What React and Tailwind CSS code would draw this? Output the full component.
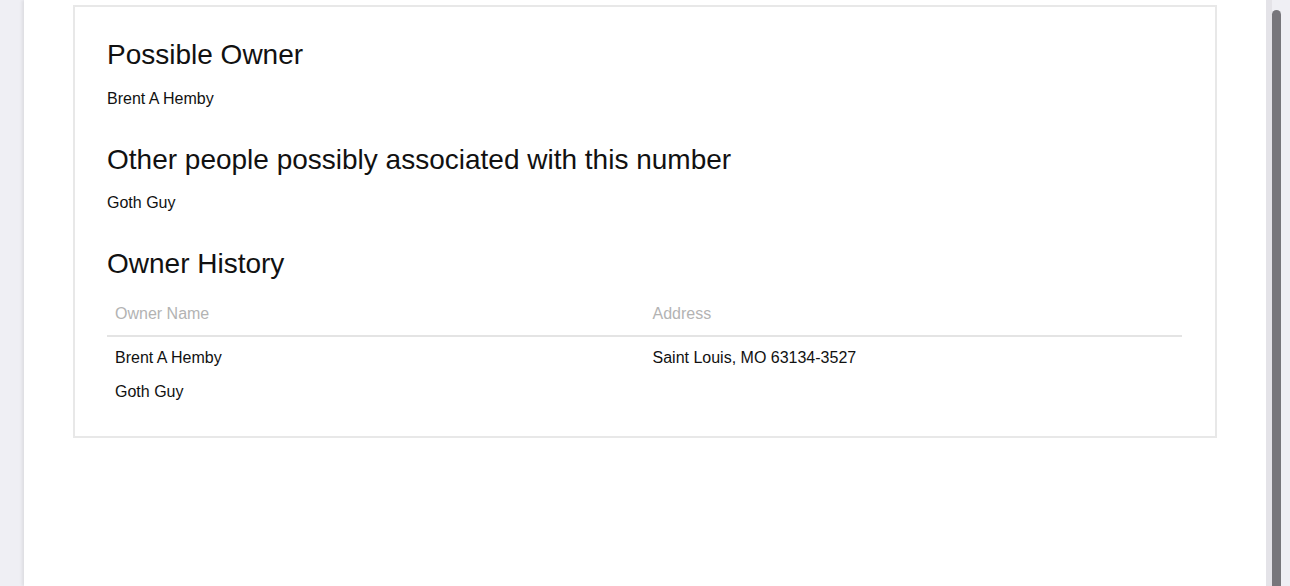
import React from 'react';

const owners = [
  { name: 'Brent A Hemby', address: 'Saint Louis, MO 63134-3527' },
  { name: 'Goth Guy', address: '' },
];

const App = () => {
  return (
    <div className="flex h-[586px] w-[1290px] overflow-hidden bg-[#efeff4] font-['Liberation_Sans',Arial,sans-serif] text-[#111]">
      <div className="w-[24px] shrink-0 bg-[#efeff4]" />
      <div className="flex-1 bg-white shadow-[-2px_0_3px_rgba(0,0,0,0.08)]">
        <div className="ml-[49px] mr-[49px] mt-[5px] border-2 border-[#e8e8e8] pl-[32px] pr-[33px] pt-[31px] pb-[27px]">
          <h2 className="text-[28px] leading-[34px]">Possible Owner</h2>
          <p className="mt-[17px] text-[16px] leading-[20px]">Brent A Hemby</p>

          <h2 className="mt-[34px] text-[28px] leading-[34px]">Other people possibly associated with this number</h2>
          <p className="mt-[16px] text-[16px] leading-[20px]">Goth Guy</p>

          <h2 className="mt-[34px] text-[28px] leading-[34px]">Owner History</h2>
          <table className="mt-[20px] w-full table-fixed text-left text-[16px]">
            <thead>
              <tr className="border-b-2 border-[#e4e4e4]">
                <th className="w-1/2 px-[8px] pb-[11px] pt-[3px] font-normal leading-[20px] text-[#b3b3b3]">Owner Name</th>
                <th className="w-1/2 px-[8px] pb-[11px] pt-[3px] font-normal leading-[20px] text-[#b3b3b3]">Address</th>
              </tr>
            </thead>
            <tbody>
              {owners.map((o, i) => (
                <tr key={i}>
                  <td className={`px-[8px] leading-[20px] ${i === 0 ? 'pt-[11px] pb-[7px]' : 'pt-[7px] pb-[7px]'}`}>{o.name}</td>
                  <td className={`px-[8px] leading-[20px] ${i === 0 ? 'pt-[11px] pb-[7px]' : 'pt-[7px] pb-[7px]'}`}>{o.address}</td>
                </tr>
              ))}
            </tbody>
          </table>
        </div>
      </div>
      <div className="flex w-[24px] shrink-0 bg-[#efeff4]">
        <div className="w-[6px] bg-[#e4e3e8]" />
        <div className="mt-[10px] w-[9px] rounded-t-full bg-[#77767b]" />
      </div>
    </div>
  );
};

export default App;
